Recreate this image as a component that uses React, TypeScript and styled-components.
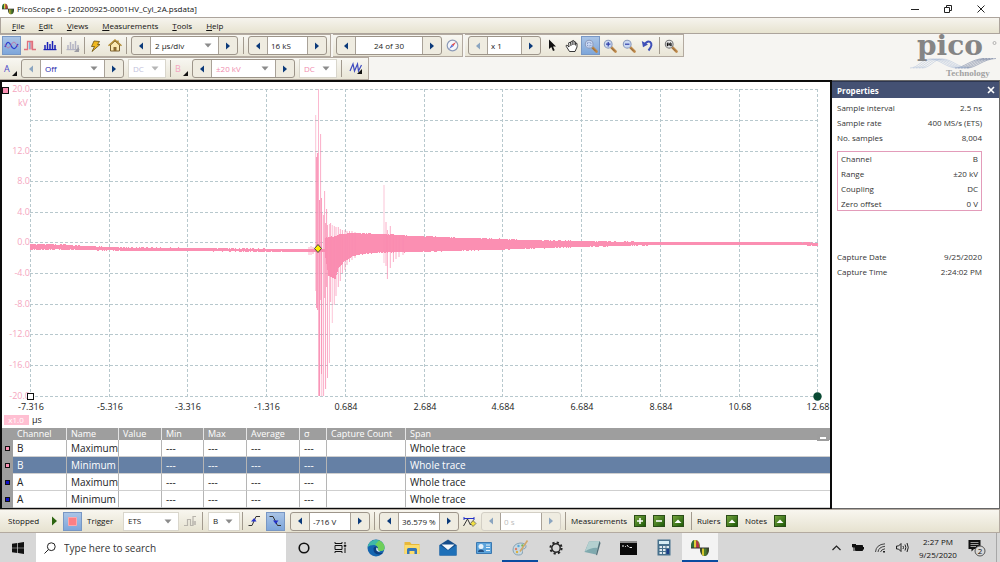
import React from "react";
import styled, { createGlobalStyle, css } from "styled-components";

const GlobalStyle = createGlobalStyle`
  * { box-sizing: border-box; }
  html, body { margin: 0; padding: 0; }
  body { font-family: "Open Sans", "Noto Sans", sans-serif; font-size: 8px; line-height: 12px; color: #222; background: #fff; }
  button, input, select { font: inherit; color: inherit; margin: 0; padding: 0; border: 0; background: none; border-radius: 0; }
  svg { display: block; }
`;

const Window = styled.div`
  display: flex;
  flex-direction: column;
  min-height: 100vh;
`;

/* ---------- title bar and menus ---------- */

const TitleBar = styled.header`
  display: flex;
  align-items: center;
  height: 17px;
  padding: 0 3px 0 2px;
  gap: 3px;
  background: #fff;
`;
const Title = styled.h1`
  flex: 1;
  margin: 0;
  font-size: 8px;
  font-weight: 400;
  line-height: 16px;
  color: #111;
  white-space: nowrap;
`;
const WindowButtons = styled.div`
  display: flex;
`;
const WindowButton = styled.button`
  display: grid;
  place-items: center;
  width: 33px;
  height: 16px;
`;
const MenuBar = styled.nav`
  display: flex;
  align-items: center;
  height: 17px;
  gap: 14px;
  padding-left: 11px;
  border: 1px solid #aca49c;
  background: linear-gradient(#f6f4ee, #e7e3d0);
`;
const MenuItem = styled.button`
  line-height: 14px;
  color: #111;
  &::first-letter { text-decoration: underline; }
`;

/* ---------- toolbars ---------- */

const ToolArea = styled.div`
  display: flex;
  justify-content: space-between;
  background: #f6f5f2;
`;
const ToolRows = styled.div`
  display: flex;
  flex-direction: column;
`;
const ToolRow = styled.div`
  display: flex;
  gap: 2px;
  height: 23px;
`;
const Group = styled.div<{ $gap?: number; $left?: number }>`
  display: flex;
  align-items: center;
  gap: ${(p) => p.$gap ?? 4}px;
  padding: 0 3px 0 ${(p) => p.$left ?? 3}px;
  border: 1px solid #b3aaa0;
  border-left-width: 0;
  background: linear-gradient(#f8f7f2, #e9e5d6);
`;
const Separator = styled.span`
  align-self: stretch;
  width: 1px;
  margin: 2px 0;
  background: #a29a8e;
`;
const SpacedSeparator = styled(Separator)`
  margin: 2px 1px 2px 2px;
`;
const StepGap = styled.span`
  width: 3px;
`;
const ToolGap = styled.span`
  width: 2px;
`;
const ToolButton = styled.button<{ $active?: boolean }>`
  display: grid;
  place-items: center;
  flex: none;
  width: 19px;
  height: 19px;
  ${(p) =>
    p.$active &&
    css`
      background: linear-gradient(#a9c4e6, #7ea6da);
      border: 1px solid #7897c4;
    `}
`;
const StepperBox = styled.div<{ $off?: boolean }>`
  display: flex;
  flex: none;
  height: 19px;
  border: 1px solid ${(p) => (p.$off ? "#d3cfc5" : "#9d958a")};
  border-radius: 3px;
  overflow: hidden;
  background: #efece1;
`;
const StepArrow = styled.button`
  display: grid;
  place-items: center;
  width: 18px;
  height: 17px;
`;
const Field = styled.span<{ $w: number }>`
  display: grid;
  width: ${(p) => p.$w}px;
  background: #fff;
  border: solid #a9a298;
  border-width: 0 1px;
  align-items: center;
  & > * { grid-area: 1 / 1; }
  & > svg { justify-self: end; margin-right: 6px; pointer-events: none; }
`;
const FieldInput = styled.input<{ $center?: boolean; $color?: string }>`
  width: 100%;
  height: 17px;
  padding-left: ${(p) => (p.$center ? 0 : 3)}px;
  text-align: ${(p) => (p.$center ? "center" : "left")};
  color: ${(p) => p.$color ?? "#222"};
`;
const FieldSelect = styled.select<{ $color?: string }>`
  width: 100%;
  height: 17px;
  padding-left: 4px;
  appearance: none;
  color: ${(p) => p.$color ?? "#222"};
  opacity: 1;
`;
const PlainSelect = styled(Field)`
  flex: none;
  height: 19px;
  border: 1px solid #d9d6cc;
`;
const ChannelButton = styled.button<{ $color: string }>`
  display: flex;
  align-items: flex-end;
  justify-content: space-between;
  width: 13px;
  height: 15px;
  font-size: 9px;
  line-height: 15px;
  color: ${(p) => p.$color};
`;

/* ---------- main area ---------- */

const Main = styled.main`
  display: grid;
  grid-template-columns: minmax(0, 1fr) 168px;
  flex: 1;
`;
const ScopePanel = styled.section`
  display: flex;
  flex-direction: column;
  border: 2px solid #0c0c0c;
  border-bottom-width: 1px;
`;
const Chart = styled.svg`
  width: 100%;
  height: auto;
  background: #fff;
  font-size: 9px;
`;
const TableWrap = styled.div`
  position: relative;
`;
const Collapse = styled.button`
  position: absolute;
  right: 1px;
  top: 6px;
  width: 12px;
  height: 7px;
  background: #9d9d9d;
  display: grid;
  place-items: center;
  &::after { content: ""; width: 6px; height: 2px; background: #fff; }
`;
const Table = styled.table`
  width: 100%;
  table-layout: fixed;
  border-collapse: separate;
  border-spacing: 0;
  th, td {
    padding: 0 0 0 4px;
    text-align: left;
    font-weight: 400;
    white-space: nowrap;
    border-right: 1px solid #b5b5b5;
  }
  th:last-child, td:last-child { border-right: 0; }
  th { height: 12px; line-height: 12px; font-size: 9px; background: #9e9e9e; color: #fff; border-color: #e4e4e4; }
  th:first-child, td:first-child { padding-left: 3px; background: #9e9e9e; border-right: 0; }
`;
const Row = styled.tr<{ $selected?: boolean }>`
  td {
    height: 17px;
    line-height: 16px;
    font-size: 10px;
    color: ${(p) => (p.$selected ? "#fff" : "#222")};
    background: ${(p) => (p.$selected ? "#6580a5" : "#fff")};
    border-bottom: 1px solid #cfcfcf;
  }
  td:first-child { border-bottom-color: #9e9e9e; }
`;
const Swatch = styled.span<{ $color: string }>`
  display: block;
  width: 5px;
  height: 5px;
  background: ${(p) => p.$color};
  border: 1px solid #111;
`;

const PropsPanel = styled.aside`
  display: flex;
  flex-direction: column;
  border: solid #666;
  border-width: 1px 1px 1px 0;
  background: #fff;
`;
const PropsHeader = styled.div`
  display: flex;
  align-items: center;
  justify-content: space-between;
  height: 17px;
  padding: 0 4px 0 5px;
  background: #445173;
  color: #fff;
  border-top: 1px solid #2d3650;
`;
const PropsTitle = styled.h2`
  margin: 0;
  font-size: 8px;
  line-height: 15px;
  font-weight: 700;
`;
const PropList = styled.dl<{ $top: number; $boxed?: boolean }>`
  margin: ${(p) => p.$top}px 17px 0 5px;
  ${(p) =>
    p.$boxed &&
    css`
      padding: 0 4px;
      box-shadow: inset 0 0 0 1px #e39cba;
    `}
`;
const PropRow = styled.div`
  display: flex;
  justify-content: space-between;
  line-height: 15px;
  color: #333;
  dt, dd { margin: 0; }
`;

/* ---------- status bar and taskbar ---------- */

const StatusBar = styled.footer`
  display: flex;
  align-items: center;
  height: 24px;
  padding-left: 8px;
  gap: 5px;
  border: solid #b3aaa0;
  border-width: 1px 1px 1px 0;
  background: linear-gradient(#f8f6ef, #e6e2d0);
  white-space: nowrap;
`;
const Cluster = styled.div<{ $gap: number }>`
  display: flex;
  align-items: center;
  align-self: stretch;
  gap: ${(p) => p.$gap}px;
`;
const StatusText = styled.span<{ $w: number }>`
  width: ${(p) => p.$w}px;
  color: #111;
`;
const GreenButton = styled.button`
  display: grid;
  place-items: center;
  width: 12px;
  height: 12px;
  margin-right: 2px;
  background: linear-gradient(135deg, #76a43e, #1d5a08);
  border: 1px solid #2a4d18;
`;
const Taskbar = styled.footer`
  display: flex;
  align-items: stretch;
  height: 29px;
  background: #d7d7d7;
`;
const StartButton = styled.button`
  display: grid;
  place-items: center;
  width: 36px;
`;
const SearchBox = styled.label`
  display: flex;
  align-items: center;
  gap: 8px;
  width: 250px;
  padding-left: 8px;
  background: #fff;
`;
const SearchInput = styled.input`
  flex: 1;
  min-width: 0;
  font-size: 10px;
  line-height: 20px;
  &::placeholder { color: #333; opacity: 1; }
`;
const TaskButton = styled.button<{ $open?: boolean; $active?: boolean }>`
  display: grid;
  place-items: center;
  width: 36px;
  ${(p) => p.$active && css`background: #f3f3f3;`}
  ${(p) => (p.$open || p.$active) && css`box-shadow: inset 0 -2px 0 #0a4ba0;`}
`;
const Tray = styled.div`
  display: flex;
  align-items: center;
  margin-left: auto;
  gap: 10px;
`;
const Clock = styled.time`
  width: 40px;
  text-align: center;
  line-height: 13px;
  color: #111;
`;
const TrayIcon = styled.button`
  display: grid;
  place-items: center;
  width: 12px;
  height: 20px;
`;
const Notify = styled.button`
  display: grid;
  place-items: center;
  width: 18px;
  height: 20px;
`;
const ShowDesktop = styled.button`
  align-self: stretch;
  width: 4px;
  border-left: 1px solid #a8a8a8;
`;

/* ---------- small drawings ---------- */

const LogoArt = styled.svg`
  flex: none;
  overflow: visible;
`;

const Tri = ({ left, off }: { left?: boolean; off?: boolean }) => (
  <svg width="6" height="8" viewBox="0 0 6 8">
    <path d={left ? "M5 0.5V7.5L1 4Z" : "M1 0.5V7.5L5 4Z"} fill={off ? "#8ba5c0" : "#0b3a7a"} />
  </svg>
);
const Caret = ({ light }: { light?: boolean }) => (
  <svg width="8" height="5" viewBox="0 0 8 5">
    <path d="M0.5 0.5H7.5L4 4.5Z" fill={light ? "#b5b5b5" : "#8b8b8b"} />
  </svg>
);
const Corner = () => (
  <svg width="5" height="5" viewBox="0 0 5 5">
    <path d="M5 0V5H0Z" fill="#111" />
  </svg>
);

const PicoMark = ({ size }: { size: number }) => (
  <svg width={size} height={size} viewBox="0 0 18 18">
    <path d="M0 9V6Q1 1 4.5 1Q8 1 9 6V9Z" fill="#7c9a2a" />
    <path d="M0 9V6Q1 1 3 1.3V9Z" fill="#2f6b3a" />
    <path d="M3 9V1.2H5.2V9Z" fill="#e0cf3a" />
    <path d="M5.2 9V1.2Q8 2 8.4 9Z" fill="#b3314b" />
    <path d="M9 9V12Q10 17 13.5 17Q17 17 18 12V9Z" fill="#3c4a2c" />
    <path d="M11 9V15.5Q12 17 13 17V9Z" fill="#d6c62e" />
    <path d="M13 9V17Q15 17 15.6 15.5V9Z" fill="#4b7a2c" />
    <path d="M0 9H18" stroke="#333" strokeWidth="1" />
  </svg>
);

const Magnifier = ({ sign, binoc }: { sign?: "+" | "-" | "o"; binoc?: boolean }) => (
  <svg width="14" height="14" viewBox="0 0 14 14">
    <path d="M8 8L12.5 12.5" stroke="#c08a4a" strokeWidth="2.6" strokeLinecap="round" />
    <path d="M8.4 8.9L11.6 12.2" stroke="#7c5a3a" strokeWidth="0.8" />
    <circle cx="5.2" cy="5.2" r="3.9" fill={binoc ? "#e8e8e8" : "#c9d8f2"} stroke={binoc ? "#777" : "#8c9bbd"} strokeWidth="1.1" />
    {sign === "+" && <path d="M5.2 3V7.4M3 5.2H7.4" stroke="#2f3fa8" strokeWidth="1.2" />}
    {sign === "-" && <path d="M3 5.2H7.4" stroke="#2f3fa8" strokeWidth="1.2" />}
    {sign === "o" && <rect x="3.5" y="3.5" width="3.4" height="3.4" fill="none" stroke="#6a7fb5" strokeWidth="0.8" strokeDasharray="1 1" />}
    {binoc && <path d="M3 7V4.4L4 3.4V7ZM7.4 7V4.4L6.4 3.4V7ZM4.6 4.4H5.8V6.2H4.6Z" fill="#111" stroke="#111" strokeWidth="0.4" />}
  </svg>
);

const BarsIcon = ({ off }: { off?: boolean }) => {
  const c = off ? "#b4b4c4" : "#1a22b8";
  return (
    <svg width="14" height="13" viewBox="0 0 14 13">
      <path d="M2 6V10M4.5 3V10M7 5V10M9.5 2V10M12 6V10" stroke={c} strokeWidth="1.5" />
      <path d="M0.5 10.6H13.5" stroke={c} strokeWidth="1.2" />
      {off && <path d="M13 8V13H8Z" fill="#9c9ca4" />}
    </svg>
  );
};

const UpMark = () => (
  <svg width="8" height="8" viewBox="0 0 8 8"><path d="M0.5 6L4 2.5L7.5 6Z" fill="#fff" /></svg>
);

/* ---------- controls ---------- */

type StepperProps = {
  name: string;
  value: string;
  w: number;
  select?: boolean;
  center?: boolean;
  color?: string;
  off?: boolean;
  leftOff?: boolean;
};
const Stepper = ({ name, value, w, select, center, color, off, leftOff }: StepperProps) => (
  <StepperBox $off={off}>
    <StepArrow aria-label={`${name} down`} disabled={off || leftOff}>
      <Tri left off={off || leftOff} />
    </StepArrow>
    <Field $w={w}>
      {select ? (
        <>
          <FieldSelect aria-label={name} $color={color} defaultValue={value}>
            <option>{value}</option>
          </FieldSelect>
          <Caret />
        </>
      ) : (
        <FieldInput aria-label={name} $center={center} $color={color} defaultValue={value} disabled={off} />
      )}
    </Field>
    <StepArrow aria-label={`${name} up`} disabled={off}>
      <Tri off={off} />
    </StepArrow>
  </StepperBox>
);

const DropDown = ({ name, value, w, color, off }: { name: string; value: string; w: number; color?: string; off?: boolean }) => (
  <PlainSelect $w={w}>
    <FieldSelect aria-label={name} $color={color} defaultValue={value} disabled={off}>
      <option>{value}</option>
    </FieldSelect>
    <Caret light={off} />
  </PlainSelect>
);

/* ---------- waveform ---------- */

type Knot = [number, number, number];
const envelope: Knot[] = [
  [30, 244, 249.6], [60, 244.6, 249.6], [90, 246, 250], [130, 247.6, 251], [200, 248, 251],
  [250, 248.6, 251.6], [300, 249, 252], [324, 249, 252], [325, 238, 258], [328, 237, 276],
  [335, 236, 279], [338, 235, 268], [343, 234, 262], [353, 233, 256], [367, 233.5, 253.5],
  [383, 234, 252.5], [413, 236, 252], [453, 237.5, 251], [503, 239, 249.6], [530, 240, 248.6],
  [560, 240.6, 247.6], [620, 241.6, 246], [660, 242, 245], [735, 242, 245], [800, 242, 245], [817, 243, 246],
];
const spikes: [number, number, number, number][] = [
  [309, 247, 255, 0.7], [311, 246, 255, 0.7], [313, 247, 254, 0.8],
  [315.7, 115, 291, 0.5], [316.7, 157, 308, 1], [317.7, 153, 310, 1], [318.5, 89, 396, 0.6],
  [319.6, 200, 396, 1], [320.6, 134, 300, 0.7], [321.5, 198, 374, 0.8], [321.8, 213, 396, 0.6],
  [323.6, 215, 396, 0.7], [324.6, 191, 298, 0.7], [325.6, 223, 389, 0.8], [326.6, 209, 287, 0.8],
  [327.5, 225, 378, 0.7], [329.4, 224, 363, 0.6], [330.6, 223, 302, 0.7], [332.3, 225, 323, 0.5],
  [334.3, 226, 305, 0.6], [336, 227, 296, 0.7], [338.3, 227, 287, 0.7], [340.3, 229, 281, 0.7],
  [342.4, 230, 273, 0.7], [345, 230, 270, 0.7], [347, 231, 265, 0.7], [349.5, 231, 262, 0.7],
  [352, 231, 260, 0.7], [355, 232, 258, 0.7], [384, 185, 263, 0.5], [386, 222, 266, 0.7],
  [387.4, 230, 279, 0.7], [390.3, 226, 268, 0.7], [393.4, 235, 262, 0.7], [396, 235, 259, 0.7],
  [399, 236, 257, 0.7], [403, 236, 255, 0.6],
];
const gridX = [30, 109, 187, 266, 345, 424, 502, 581, 660, 739, 817];
const gridY = [89, 120, 151, 181, 212, 242, 273, 304, 334, 365, 396];
const xLabels = ["-7.316", "-5.316", "-3.316", "-1.316", "0.684", "2.684", "4.684", "6.684", "8.684", "10.68", "12.68"];
const yLabels = ["20.0", "", "12.0", "8.0", "4.0", "0.0", "-4.0", "-8.0", "-12.0", "-16.0", "-20.0"];

const tracePath = () => {
  let d = "";
  for (let x = 30; x <= 817; x += 1) {
    const i = Math.max(1, envelope.findIndex((k) => k[0] >= x));
    const [x0, a0, b0] = envelope[i - 1];
    const [x1, a1, b1] = envelope[i];
    const t = (x - x0) / (x1 - x0);
    const n = Math.abs(Math.sin(x * 12.9898) * 43758.5453) % 1;
    const m = Math.abs(Math.sin(x * 78.233) * 12543.123) % 1;
    const top = Math.round(a0 + (a1 - a0) * t + (n - 0.5) * 0.8);
    const bottom = Math.round(b0 + (b1 - b0) * t + (m - 0.5) * 0.8);
    d += `M${x + 0.5} ${top}V${bottom}`;
  }
  return d;
};

const Waveform = () => (
  <Chart viewBox="2 82 828 346" role="img" aria-label="Channel B trace">
    <g stroke="#b7c8cd" strokeWidth="1" strokeDasharray="3 2">
      {gridX.map((x) => <path key={x} d={`M${x + 0.5} 89V397`} />)}
      {gridY.map((y) => <path key={y} d={`M30 ${y + 0.5}H818`} />)}
    </g>
    <g fill="#f5a6c0" textAnchor="end">
      {yLabels.map((l, i) => <text key={i} x="30" y={gridY[i] + 3}>{l}</text>)}
      <text x="28" y="106">kV</text>
    </g>
    <g fill="#222" textAnchor="middle">
      {xLabels.map((l, i) => <text key={l} x={gridX[i] + 1} y="410">{l}</text>)}
    </g>
    <path d={tracePath()} stroke="#fb8fb2" strokeWidth="1.1" />
    <g stroke="#f98bb0">
      {spikes.map(([x, a, b, o]) => <path key={x} d={`M${x} ${a}V${b}`} strokeOpacity={o} />)}
    </g>
    <path d="M318 244.5L321.5 248.5L318 252.5L314.5 248.5Z" fill="#ffee00" stroke="#444" />
    <rect x="2.5" y="87.5" width="6" height="6" fill="#fb8fb2" stroke="#111" />
    <rect x="27.5" y="393.5" width="6" height="6" fill="#fff" stroke="#111" />
    <circle cx="817.5" cy="396.5" r="4.2" fill="#0a4a34" />
    <rect x="4" y="415" width="25" height="10" fill="#ffbfd2" />
    <text x="16" y="423" fill="#fff" fontSize="8" textAnchor="middle">x1.0</text>
    <text x="32" y="423" fill="#222">µs</text>
  </Chart>
);

const measurements = [
  { ch: "B", name: "Maximum", color: "#fb8fb2" },
  { ch: "B", name: "Minimum", color: "#fb8fb2", selected: true },
  { ch: "A", name: "Maximum", color: "#1010c8" },
  { ch: "A", name: "Minimum", color: "#1010c8" },
];
const columnWidths = [11, 54, 52, 43, 42, 43, 53, 27, 79];

const Props = ({ rows, top, boxed }: { rows: [string, string][]; top: number; boxed?: boolean }) => (
  <PropList $top={top} $boxed={boxed}>
    {rows.map(([k, v]) => (
      <PropRow key={k}>
        <dt>{k}</dt>
        <dd>{v}</dd>
      </PropRow>
    ))}
  </PropList>
);

const Logo = () => (
  <LogoArt width="92" height="46" viewBox="908 34 92 46">
    <g fill="none" strokeWidth="0.5">
      {[0, 3, 6, 9, 12].map((o) => (
        <g key={o}>
          <path d={`M${910 + o} 68C${918 + o} 68 ${922 + o} 59 ${930 + o} 59C${940 + o} 59 ${946 + o} 68 ${957 + o} 68`} stroke="#a9bbd6" />
          <path d={`M${955 + o} 68C${964 + o} 68 ${971 + o} 59 ${984 + o} 58.5`} stroke="#5c6d90" />
        </g>
      ))}
    </g>
    <text x="917" y="55" fontFamily="DejaVu Serif, serif" fontWeight="700" fontSize="28" fill="#858585">pico</text>
    <circle cx="994.5" cy="43" r="1.5" fill="none" stroke="#999" strokeWidth="0.7" />
    <text x="946" y="76" fontFamily="Liberation Serif, serif" fontWeight="700" fontSize="9" fill="#a2a2a2">Technology</text>
  </LogoArt>
);

export default function App() {
  return (
    <Window>
      <GlobalStyle />
      <TitleBar>
        <PicoMark size={12} />
        <Title>PicoScope 6 - [20200925-0001HV_Cyl_2A.psdata]</Title>
        <WindowButtons>
          <WindowButton aria-label="Minimize">
            <svg width="8" height="8" viewBox="0 0 8 8"><path d="M0 4.5H8" stroke="#222" /></svg>
          </WindowButton>
          <WindowButton aria-label="Restore">
            <svg width="8" height="8" viewBox="0 0 8 8"><path d="M0.5 2.5H5.5V7.5H0.5ZM2.5 2V0.5H7.5V5.5H6" fill="none" stroke="#222" /></svg>
          </WindowButton>
          <WindowButton aria-label="Close">
            <svg width="8" height="8" viewBox="0 0 8 8"><path d="M0.5 0.5L7.5 7.5M7.5 0.5L0.5 7.5" stroke="#222" /></svg>
          </WindowButton>
        </WindowButtons>
      </TitleBar>
      <MenuBar>
        {["File", "Edit", "Views", "Measurements", "Tools", "Help"].map((m) => <MenuItem key={m}>{m}</MenuItem>)}
      </MenuBar>

      <ToolArea>
        <ToolRows>
          <ToolRow>
            <Group $gap={0} $left={2}>
              <ToolButton $active aria-label="Scope mode">
                <svg width="15" height="13" viewBox="0 0 15 13" fill="none">
                  <path d="M1 8C3 2 5 2 7 6.5S11 11 14 5" stroke="#2b3ccc" strokeWidth="1.3" />
                  <path d="M1 5C3 10 5 10 7 6S11 2 14 8" stroke="#c46a9a" strokeWidth="0.8" />
                </svg>
              </ToolButton>
              <ToolButton aria-label="Persistence mode">
                <svg width="13" height="11" viewBox="0 0 13 11" fill="none">
                  <path d="M5 1.5H9V9.5H5Z" fill="#e9909a" />
                  <path d="M0 9.5H3.5V1.5H8.5V9.5H12" stroke="#e0707c" strokeWidth="1.3" />
                  <path d="M5.6 2.5V9" stroke="#7fb4de" strokeWidth="1.5" />
                </svg>
              </ToolButton>
              <ToolButton aria-label="Spectrum mode"><BarsIcon /></ToolButton>
              <SpacedSeparator />
              <ToolButton aria-label="Spectrum options" disabled><BarsIcon off /></ToolButton>
              <SpacedSeparator />
              <ToolButton aria-label="Auto setup">
                <svg width="11" height="12" viewBox="0 0 11 12"><path d="M4 1L9.5 1.5L7.5 4.5H10L2 11.5L4.5 6.5H1.5Z" fill="#f0b820" stroke="#6a5010" strokeWidth="0.8" /></svg>
              </ToolButton>
              <ToolButton aria-label="Home">
                <svg width="14" height="13" viewBox="0 0 14 13"><path d="M2.5 6V12H11.5V6L7 2Z" fill="#fbe8b0" stroke="#7a6030" /><path d="M0.5 6.8L7 1L13.5 6.8M10 1.5V3.5" fill="none" stroke="#b08a30" strokeWidth="1.4" /><path d="M5.5 8H8.5V12H5.5Z" fill="#8a6a30" /></svg>
              </ToolButton>
              <SpacedSeparator />
              <StepGap />
              <Stepper name="Timebase" value="2 µs/div" w={69} select />
              <StepGap />
              <SpacedSeparator />
              <StepGap />
              <Stepper name="Samples" value="16 kS" w={41} />
            </Group>
            <Group>
              <Stepper name="Buffer" value="24 of 30" w={68} center />
              <svg width="13" height="13" viewBox="0 0 13 13"><circle cx="6.5" cy="6.5" r="5.3" fill="#f4f6fb" stroke="#8d9bb8" strokeWidth="1.2" /><path d="M10 3L5.8 5.5L7.3 7.2Z" fill="#e0484c" /><path d="M3 10L5.8 5.5L7.3 7.2Z" fill="#5a6fd0" /></svg>
            </Group>
            <Group $gap={0}>
              <Stepper name="Zoom factor" value="x 1" w={35} leftOff />
              <ToolGap />
              <ToolButton aria-label="Select">
                <svg width="9" height="13" viewBox="0 0 9 13"><path d="M1 0.5V10L3.3 8L5 12L6.7 11.2L5 7.5H8Z" fill="#111" /></svg>
              </ToolButton>
              <ToolButton aria-label="Pan">
                <svg width="14" height="14" viewBox="0 0 14 14"><path d="M4 8L2 6.2Q0.8 6 1.2 7.3L4.5 12.5H10L12 8V4.5Q11 3.6 10.6 5V3Q9.7 1.8 9 3V2Q8 0.8 7.2 2V3Q6.2 1.8 5.4 3L6 7M7.2 3V6M9 3V6M10.6 5V6.5M4 8L3.6 4Q4 2.8 5 3.8" fill="#fff" stroke="#222" strokeWidth="0.9" /></svg>
              </ToolButton>
              <ToolButton $active aria-label="Zoom window"><Magnifier sign="o" /></ToolButton>
              <ToolButton aria-label="Zoom in"><Magnifier sign="+" /></ToolButton>
              <ToolButton aria-label="Zoom out"><Magnifier sign="-" /></ToolButton>
              <ToolButton aria-label="Undo zoom">
                <svg width="13" height="13" viewBox="0 0 13 13"><path d="M3.5 5.5Q6 1.5 9 2.8Q12.5 5.5 7.5 11.5" fill="none" stroke="#3f50b8" strokeWidth="2" /><path d="M0.8 2L2 8.2L7 5.6Z" fill="#3f50b8" /></svg>
              </ToolButton>
              <SpacedSeparator />
              <ToolButton aria-label="Zoom full"><Magnifier binoc /></ToolButton>
            </Group>
          </ToolRow>
          <ToolRow>
            <Group $left={4}>
              <ChannelButton $color="#4a4ac8">A<Corner /></ChannelButton>
              <Stepper name="Channel A range" value="Off" w={65} select color="#2222aa" leftOff />
              <DropDown name="Channel A coupling" value="DC" w={38} color="#c2c2dc" off />
              <Separator />
              <ChannelButton $color="#f5a6c0">B<Corner /></ChannelButton>
              <Stepper name="Channel B range" value="±20 kV" w={65} select color="#f08cae" />
              <DropDown name="Channel B coupling" value="DC" w={38} color="#f08cae" />
              <Separator />
              <ToolButton aria-label="Signal generator">
                <svg width="14" height="13" viewBox="0 0 14 13"><path d="M1 9L4 2L5.5 9L8.5 2L9.5 9L12.5 3" fill="none" stroke="#3f4cc0" strokeWidth="1.2" /><path d="M13 7V12H8Z" fill="#111" /></svg>
              </ToolButton>
            </Group>
          </ToolRow>
        </ToolRows>
        <Logo />
      </ToolArea>

      <Main>
        <ScopePanel>
          <Waveform />
          <TableWrap>
            <Table>
              <colgroup>
                {columnWidths.map((w, i) => <col key={i} width={w} />)}
                <col />
              </colgroup>
              <thead>
                <tr>
                  {["", "Channel", "Name", "Value", "Min", "Max", "Average", "σ", "Capture Count", "Span"].map((h) => <th key={h}>{h}</th>)}
                </tr>
              </thead>
              <tbody>
                {measurements.map((m) => (
                  <Row key={m.ch + m.name} $selected={m.selected}>
                    <td><Swatch $color={m.color} /></td>
                    <td>{m.ch}</td>
                    <td>{m.name}</td>
                    <td />
                    <td>---</td>
                    <td>---</td>
                    <td>---</td>
                    <td>---</td>
                    <td />
                    <td>Whole trace</td>
                  </Row>
                ))}
              </tbody>
            </Table>
            <Collapse aria-label="Collapse measurements" />
          </TableWrap>
        </ScopePanel>
        <PropsPanel>
          <PropsHeader>
            <PropsTitle>Properties</PropsTitle>
            <button aria-label="Close properties">
              <svg width="8" height="8" viewBox="0 0 8 8"><path d="M1 1L7 7M7 1L1 7" stroke="#fff" strokeWidth="1.6" /></svg>
            </button>
          </PropsHeader>
          <Props top={2} rows={[["Sample interval", "2.5 ns"], ["Sample rate", "400 MS/s (ETS)"], ["No. samples", "8,004"]]} />
          <Props top={6} boxed rows={[["Channel", "B"], ["Range", "±20 kV"], ["Coupling", "DC"], ["Zero offset", "0 V"]]} />
          <Props top={38} rows={[["Capture Date", "9/25/2020"], ["Capture Time", "2:24:02 PM"]]} />
        </PropsPanel>
      </Main>

      <StatusBar>
        <StatusText $w={38}>Stopped</StatusText>
        <button aria-label="Start"><svg width="7" height="10" viewBox="0 0 7 10"><path d="M1 0.5V9.5L6 5Z" fill="#2c6410" /></svg></button>
        <ToolButton $active aria-label="Stop"><svg width="9" height="9" viewBox="0 0 9 9"><path d="M0.5 0.5H8.5V8.5H0.5Z" fill="#fb7f84" stroke="#fba9ac" /></svg></ToolButton>
        <StatusText $w={31}>Trigger</StatusText>
        <DropDown name="Trigger mode" value="ETS" w={56} />
        <svg width="13" height="12" viewBox="0 0 13 12" fill="none"><path d="M0 10.5H3.5V4.5H6.5V10.5H9V1.5H12" stroke="#b8b4ac" strokeWidth="1.2" /><path d="M8 6H12V10H8Z" fill="#c4c0b8" /></svg>
        <Separator />
        <Cluster $gap={2}>
          <DropDown name="Trigger channel" value="B" w={32} />
          <Separator />
          <ToolButton aria-label="Rising edge">
            <svg width="13" height="12" viewBox="0 0 13 12" fill="none"><path d="M0.5 10.5H4L8 1.5H12" stroke="#333" /><path d="M3 6.5L6.2 3L8.5 6.5Z" fill="#2330c8" /></svg>
          </ToolButton>
          <ToolButton $active aria-label="Falling edge">
            <svg width="13" height="12" viewBox="0 0 13 12" fill="none"><path d="M0.5 1.5H4L8.5 10.5H12" stroke="#333" /><path d="M4 5.5H9.5L6.8 9Z" fill="#2330c8" /></svg>
          </ToolButton>
        </Cluster>
        <Cluster $gap={4}>
          <Stepper name="Trigger level" value="-716 V" w={42} />
          <Separator />
          <Stepper name="Pre-trigger" value="36.579 %" w={42} />
          <svg width="14" height="13" viewBox="0 0 14 13" fill="none"><path d="M1 2V5M1 3.5H11M11 2V5" stroke="#2330c8" /><path d="M0.5 11L4.5 4L7.5 10L10.5 5.5" stroke="#333" /><path d="M10 5.5L13 8.5L10 11.5L7.5 8.5Z" fill="#f0e040" stroke="#555" strokeWidth="0.7" /></svg>
          <Stepper name="Delay" value="0 s" w={42} off color="#bbb" />
          <Separator />
        </Cluster>
        <StatusText $w={58}>Measurements</StatusText>
        <GreenButton aria-label="Add measurement"><svg width="8" height="8" viewBox="0 0 8 8"><path d="M4 1V7M1 4H7" stroke="#fff" strokeWidth="1.6" /></svg></GreenButton>
        <GreenButton aria-label="Remove measurement"><svg width="8" height="8" viewBox="0 0 8 8"><path d="M1 4H7" stroke="#fff" strokeWidth="1.6" /></svg></GreenButton>
        <GreenButton aria-label="Edit measurement"><UpMark /></GreenButton>
        <Separator />
        <StatusText $w={24}>Rulers</StatusText>
        <GreenButton aria-label="Show rulers"><UpMark /></GreenButton>
        <StatusText $w={24}>Notes</StatusText>
        <GreenButton aria-label="Show notes"><UpMark /></GreenButton>
      </StatusBar>

      <Taskbar>
        <StartButton aria-label="Start">
          <svg width="12" height="12" viewBox="0 0 12 12"><path d="M0 1.7L5.3 1V5.7H0ZM6 0.9L12 0V5.7H6ZM0 6.3H5.3V11L0 10.3ZM6 6.3H12V12L6 11.1Z" fill="#111" /></svg>
        </StartButton>
        <SearchBox>
          <svg width="12" height="12" viewBox="0 0 12 12" fill="none"><circle cx="7.3" cy="4.7" r="3.9" stroke="#222" /><path d="M4.5 7.5L0.5 11.5" stroke="#222" /></svg>
          <SearchInput aria-label="Search" placeholder="Type here to search" />
        </SearchBox>
        <TaskButton aria-label="Cortana">
          <svg width="12" height="12" viewBox="0 0 12 12"><circle cx="6" cy="6" r="4.8" fill="none" stroke="#111" strokeWidth="1.6" /></svg>
        </TaskButton>
        <TaskButton aria-label="Task view">
          <svg width="13" height="13" viewBox="0 0 13 13" fill="none" stroke="#111"><path d="M1 1V2.5H8V1M1 4.5H8V8.5H1ZM1 12V10.5H8V12M11 1V3M11 6.5V12" /><path d="M10 4H12V5.5H10Z" fill="#111" strokeWidth="0.5" /></svg>
        </TaskButton>
        <TaskButton aria-label="Edge">
          <svg width="18" height="18" viewBox="0 0 18 18"><circle cx="9" cy="9" r="8.5" fill="#1465b0" /><path d="M0.6 8A8.5 8.5 0 0 1 17.5 8.5Q17.5 12 13.5 12Q10.5 12 11 10Q11 6 7 6Q2.5 6 0.6 8Z" fill="#3fb8a8" /><path d="M12 1.3Q17.5 4 17.5 8.5Q17.5 12 13.5 12Q10.5 12 11 10Q11 6.5 8 6Z" fill="#6fcf5a" /><path d="M6.5 9Q6 15 12 15.5Q15 15.5 16.5 13.5Q11.5 15 10 11Q11 10 10.8 8.5Q9 6.5 6.5 9Z" fill="#0c3f80" /><path d="M9.5 8.5Q11 8.5 10.8 10.2Q10.5 12 13.5 12Q11 13.5 9.5 11.5Q8.7 9.8 9.5 8.5Z" fill="#e4f2f4" /></svg>
        </TaskButton>
        <TaskButton aria-label="File Explorer">
          <svg width="16" height="14" viewBox="0 0 16 14"><path d="M0.5 1H6L7.5 3H15.5V13H0.5Z" fill="#e8b83a" /><path d="M0.5 4H15.5V13H0.5Z" fill="#fbdc6c" /><path d="M3 13V8.5Q3 7 4.5 7H11.5Q13 7 13 8.5V13H10.5V10H5.5V13Z" fill="#3474b8" /></svg>
        </TaskButton>
        <TaskButton aria-label="Mail">
          <svg width="18" height="17" viewBox="0 0 18 17"><path d="M0.5 6L9 0.5L17.5 6V16.5H0.5Z" fill="#164e8c" /><path d="M2.5 5.5H15.5L9 11Z" fill="#f4f8fc" /><path d="M0.5 6L9 11.5L17.5 6V16.5H0.5Z" fill="#1e70b8" /></svg>
        </TaskButton>
        <TaskButton aria-label="Control panel">
          <svg width="16" height="12" viewBox="0 0 16 12"><path d="M0.5 0.5H15.5V11.5H0.5Z" fill="#5ca4dc" stroke="#3a78b0" /><circle cx="5" cy="4.5" r="2.5" fill="#e6f2fb" /><path d="M2 10Q2 7.5 5 7.5T8 10Z" fill="#244f80" /><path d="M10 3H14M10 5.5H14M10 8.5H14" stroke="#e6f2fb" /></svg>
        </TaskButton>
        <TaskButton $open aria-label="Paint">
          <svg width="17" height="16" viewBox="0 0 17 16"><path d="M1 10Q1 4 8 3Q14.5 3 14 7Q13.5 9 11 9Q9.5 9.5 10.5 11.5Q11 15 6.5 15Q1.5 15 1 10Z" fill="#c6d8e2" stroke="#8aa4b4" /><circle cx="4" cy="9" r="1.2" fill="#d8806c" /><circle cx="6.5" cy="6" r="1.2" fill="#58a8d8" /><circle cx="10.5" cy="5.5" r="1.2" fill="#74b858" /><circle cx="5" cy="12" r="1.2" fill="#e0b038" /><path d="M15.5 0.5L8 11.5" stroke="#d2a868" strokeWidth="1.6" /></svg>
        </TaskButton>
        <TaskButton aria-label="Settings">
          <svg width="14" height="14" viewBox="0 0 14 14" fill="none" stroke="#222"><circle cx="7" cy="7" r="5.6" strokeWidth="2" strokeDasharray="2.2 2.2" /><circle cx="7" cy="7" r="4.2" strokeWidth="1.4" /></svg>
        </TaskButton>
        <TaskButton aria-label="Notebook">
          <svg width="17" height="16" viewBox="0 0 17 16"><path d="M5 1.5L15.5 1L12 14.5L0.5 12Z" fill="#7fa9ae" /><path d="M5 1.5L15.5 1L13.5 8Q8 7 1 11.5Z" fill="#b4d0d0" /><path d="M15.5 1L16.5 3L13 15.5L12 14.5Z" fill="#4f6f78" /></svg>
        </TaskButton>
        <TaskButton aria-label="Command prompt">
          <svg width="17" height="14" viewBox="0 0 17 14"><path d="M0 0H17V14H0Z" fill="#0a0a0a" /><path d="M0 0H17V2H0Z" fill="#8c8c8c" /><path d="M2 5H4M5 5.5H5.8M7 4L8.5 6M9.5 6.5H12" stroke="#eee" /></svg>
        </TaskButton>
        <TaskButton aria-label="Calculator">
          <svg width="14" height="17" viewBox="0 0 14 17"><path d="M0.5 0.5H13.5V16.5H0.5Z" fill="#46708c" /><path d="M2 2H12V5H2Z" fill="#d4ecf4" /><path d="M2.5 7H5V9H2.5ZM6 7H8.5V9H6ZM2.5 10H5V12H2.5ZM6 10H8.5V12H6ZM2.5 13H5V15H2.5ZM6 13H8.5V15H6ZM9.5 7H12V9H9.5Z" fill="#dfe9ee" /><path d="M9.5 10H12V15H9.5Z" fill="#1a3c88" /></svg>
        </TaskButton>
        <TaskButton $active aria-label="PicoScope"><PicoMark size={18} /></TaskButton>

        <Tray>
          <TrayIcon aria-label="Show hidden icons"><svg width="9" height="6" viewBox="0 0 9 6"><path d="M0.5 5L4.5 1L8.5 5" fill="none" stroke="#222" strokeWidth="1.2" /></svg></TrayIcon>
          <TrayIcon aria-label="Battery"><svg width="12" height="9" viewBox="0 0 12 9"><path d="M3.5 2.5H10.5V7.5H3.5Z" fill="#111" stroke="#111" /><path d="M11 4H12V6.5H11ZM0 1H4V4Q2 5.5 0 4ZM1.5 4H2.5V8H1.5Z" fill="#111" /></svg></TrayIcon>
          <TrayIcon aria-label="Network"><svg width="11" height="10" viewBox="0 0 11 10" fill="none" stroke="#444"><path d="M0.5 9Q1 1.5 10 0.8M3 9Q3.5 4 10 3.3M5.5 9Q6 6.5 10 5.8" /><path d="M8 9.5H10V8H8Z" fill="#222" stroke="none" /></svg></TrayIcon>
          <TrayIcon aria-label="Volume"><svg width="13" height="11" viewBox="0 0 13 11" fill="none" stroke="#222"><path d="M0.5 4H2.5L5 1.5V9.5L2.5 7H0.5Z" /><path d="M7 4Q8 5.5 7 7M9 2.5Q10.7 5.5 9 8.5M11 1Q13.5 5.5 11 10" /></svg></TrayIcon>
          <Clock>2:27 PM<br />9/25/2020</Clock>
          <Notify aria-label="2 notifications">
            <svg width="18" height="18" viewBox="0 0 18 18"><path d="M0.5 1H12.5V10H6L3.5 12.5V10H0.5Z" fill="#111" /><path d="M2.5 3.5H10.5M2.5 5.5H10.5M2.5 7.5H8" stroke="#d7d7d7" strokeWidth="0.7" /><circle cx="12" cy="12" r="5" fill="#d7d7d7" stroke="#555" /><text x="12" y="15" fontSize="8" textAnchor="middle" fill="#111">2</text></svg>
          </Notify>
          <ShowDesktop aria-label="Show desktop" />
        </Tray>
      </Taskbar>
    </Window>
  );
}
